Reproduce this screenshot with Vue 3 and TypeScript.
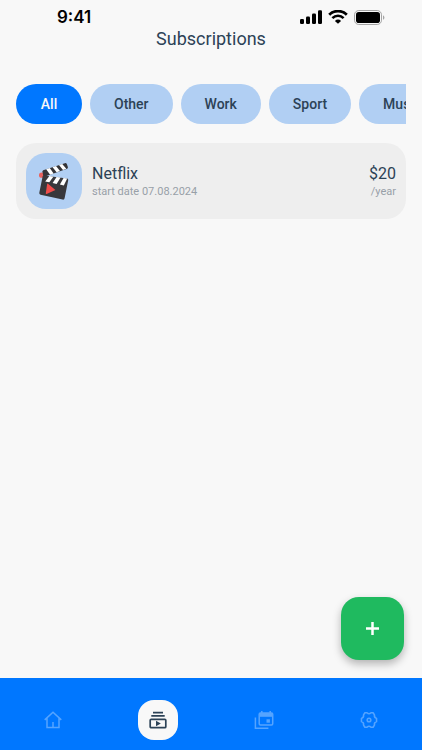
<script setup lang="ts">
import { ref } from 'vue'

interface Subscription {
  name: string
  startDate: string
  price: string
  period: string
}

const categories: string[] = ['All', 'Other', 'Work', 'Sport', 'Music']
const selected = ref<string>('All')

const subscriptions: Subscription[] = [
  { name: 'Netflix', startDate: '07.08.2024', price: '$20', period: '/year' },
]
</script>

<template>
  <div class="screen">
    <div class="status">
      <span class="time">9:41</span>
      <div class="signals">
        <svg width="22" height="14" viewBox="0 0 22 14" fill="#000" aria-hidden="true">
          <rect x="0" y="9" width="4" height="5" rx="1.2" />
          <rect x="6" y="6.5" width="4" height="7.5" rx="1.2" />
          <rect x="12" y="3.5" width="4" height="10.5" rx="1.2" />
          <rect x="18" y="0.3" width="4" height="13.7" rx="1.2" />
        </svg>
        <svg width="20" height="14" viewBox="0 0 20 14" fill="none" stroke="#000" aria-hidden="true">
          <path d="M1.2 4.7a12.6 12.6 0 0 1 17.6 0" stroke-width="2.8" />
          <path d="M4.4 8.1a8 8 0 0 1 11.2 0" stroke-width="2.6" />
          <path d="M10 13.8 6.9 10.9a4.5 4.5 0 0 1 6.2 0z" fill="#000" stroke="none" />
        </svg>
        <svg width="31" height="15" viewBox="0 0 31 15" aria-hidden="true">
          <rect x="0.5" y="0.5" width="27" height="14" rx="4.3" fill="none" stroke="#a5a5a5" />
          <rect x="2" y="2" width="24" height="11" rx="2.8" fill="#000" />
          <path d="M29 5.2v4.6c1.9-.8 1.9-3.8 0-4.6z" fill="#a5a5a5" />
        </svg>
      </div>
    </div>

    <h1 class="title">Subscriptions</h1>

    <main class="content">
      <div class="chips">
        <button
          v-for="category in categories"
          :key="category"
          type="button"
          class="chip"
          :class="{ active: category === selected }"
          @click="selected = category"
        >
          {{ category }}
        </button>
      </div>

      <article v-for="item in subscriptions" :key="item.name" class="card">
        <div class="tile">
          <svg width="32" height="38" viewBox="0 0 32 38" aria-hidden="true">
            <circle cx="3.6" cy="13.2" r="2.6" fill="#e8625f" />
            <path d="M5.4 14.6 4.4 9.8Q4.2 8.7 5.2 8.2L26.8 1.2q1.4-.4 2 .8l1.1 2.9q.3 1.2-.8 1.8L7 14.4z" fill="#343438" />
            <path d="m8.2 7.3 3.6-1.2 3.8 5.3-3.5 1.3zM14.6 5.2l3.4-1.1 4 4.9-3.4 1.3zM21 3.1l3.2-1 4.1 4.6-3.3 1.3z" fill="#fff" />
            <path d="m5.9 13.4 23.2 3.1q1.4.3 1.1 1.7L26.6 36.2q-.4 1.8-2 1.4L2.6 32.8Q1 32.4 1.3 30.8L4.6 14.4q.2-1.1 1.3-1z" fill="#38383c" />
            <path d="m11.4 14.1-4.2 5.3 4.1.9 4.1-5.6zM18.6 15.1l-4 5.9 4 .9 4-6.3zM25.6 16.1l-3.7 6.5 3.9.9 3.4-6.9z" fill="#fff" />
            <path d="m10 21.7 7.4 6.4-8.8 3.8q-.8.3-.8-.6l1.3-9.1q.2-.9.9-.5z" fill="#f04d4b" />
          </svg>
        </div>
        <div class="details">
          <h2 class="name">{{ item.name }}</h2>
          <p class="note">start date {{ item.startDate }}</p>
        </div>
        <div class="cost">
          <p class="name">{{ item.price }}</p>
          <p class="note">{{ item.period }}</p>
        </div>
      </article>

      <button type="button" class="add" aria-label="Add subscription">
        <svg width="13" height="13" viewBox="0 0 13 13" aria-hidden="true">
          <path d="M6.5 0v13M0 6.5h13" stroke="#fff" stroke-width="2.5" />
        </svg>
      </button>
    </main>

    <nav class="nav">
      <a href="#home" class="link" aria-label="Home">
        <svg width="20" height="20" viewBox="0 0 20 20" fill="none" stroke="currentColor" stroke-width="1.5" aria-hidden="true">
          <path d="M1.7 9.9 10 2.2l8.3 7.7M4 8v9.6h12V8M10 17.6V12" />
        </svg>
      </a>
      <a href="#subscriptions" class="link current" aria-label="Subscriptions" aria-current="page">
        <svg width="20" height="20" viewBox="0 0 20 20" fill="none" stroke="currentColor" stroke-width="1.7" aria-hidden="true">
          <path d="M5 2.6h10M3.3 5.9h13.4" />
          <rect x="2.2" y="9.3" width="15.6" height="8.4" rx="1" />
          <path d="m8 10.8 4.8 2.7L8 16.2z" fill="currentColor" stroke="none" />
        </svg>
      </a>
      <a href="#calendar" class="link" aria-label="Calendar">
        <svg width="20" height="20" viewBox="0 0 20 20" fill="none" stroke="currentColor" stroke-width="1.5" aria-hidden="true">
          <path d="M1.4 7.5v10.7h13" />
          <rect x="5.2" y="3" width="13.5" height="12" rx="1.2" />
          <path d="M5.2 3h13.5v3.8H5.2z" fill="currentColor" stroke="none" />
          <path d="M7.8 1v2.5M16.2 1v2.5" />
          <rect x="12.5" y="9.3" width="3.4" height="3.4" fill="currentColor" stroke="none" />
        </svg>
      </a>
      <a href="#settings" class="link" aria-label="Settings">
        <svg width="20" height="20" viewBox="-1 -1 22 22" fill="none" stroke="currentColor" stroke-width="1.7" stroke-linejoin="round" aria-hidden="true">
          <path d="M5.5 2h2.3Q10 4.2 12.2 2h2.3L16 4.4q-.6 2.9 2.3 3.8v3.6q-2.9.9-2.3 3.8L14.5 18h-2.3Q10 15.8 7.8 18H5.5L4 15.600q.6-2.900-2.300-3.800V8.200Q4.600 7.300 4 4.400z" />
          <circle cx="10" cy="10" r="2" />
        </svg>
      </a>
    </nav>
  </div>
</template>

<style>
body {
  background: #f8f8f8;
}
</style>

<style scoped>
.screen {
  display: flex;
  flex-direction: column;
  min-height: 100vh;
  background: #f8f8f8;
  color: #2c4256;
  font-family: Roboto, sans-serif;
}

.status {
  display: flex;
  justify-content: space-between;
  align-items: center;
  padding: 8px 37px 0 57px;
}

.time {
  color: #000;
  font: 600 17px/18px Inter, sans-serif;
}

.signals {
  display: flex;
  align-items: center;
  gap: 6px;
}

.title {
  margin: 0;
  font-size: 18px;
  font-weight: 400;
  line-height: 26px;
  text-align: center;
}

.content {
  position: relative;
  display: flex;
  flex: 1;
  flex-direction: column;
  padding: 32px 16px 18px;
}

.chips {
  display: flex;
  gap: 8px;
  overflow-x: auto;
  margin-bottom: 19px;
  scrollbar-width: none;
}

.chip {
  flex: none;
  min-width: 66px;
  height: 40px;
  padding: 0 24px;
  border: 0;
  border-radius: 20px;
  background: #b1cff3;
  color: #2c4256;
  font: 500 14px/20px Roboto, sans-serif;
}

.chip.active {
  background: #0077ff;
  color: #f8f8f8;
}

.card {
  display: flex;
  align-items: center;
  gap: 10px;
  padding: 10px;
  border-radius: 20px;
  background: #eeeeee;
}

.tile {
  display: flex;
  align-items: center;
  justify-content: center;
  width: 56px;
  height: 56px;
  border-radius: 20px;
  background: #b1cff3;
}

.details {
  flex: 1;
}

.cost {
  text-align: right;
}

.name {
  margin: 0;
  font-size: 16px;
  font-weight: 400;
  line-height: 20px;
}

.note {
  margin: 0;
  color: #98a0a8;
  font-size: 11px;
  line-height: 15px;
}

.add {
  position: absolute;
  right: 18px;
  bottom: 18px;
  display: flex;
  align-items: center;
  justify-content: center;
  width: 63px;
  height: 63px;
  padding: 0;
  border: 0;
  border-radius: 18px;
  background: #1fba5f;
  box-shadow: 0 4px 8px rgb(0 0 0 / 28%);
}

.nav {
  display: grid;
  grid-template-columns: repeat(4, 1fr);
  justify-items: center;
  padding: 22px 0 10px;
  background: #0077ff;
}

.link {
  display: flex;
  align-items: center;
  justify-content: center;
  width: 40px;
  height: 40px;
  border-radius: 16px;
  color: #55a4ff;
}

.link.current {
  background: #f8f8f8;
  color: #2c4256;
}
</style>
